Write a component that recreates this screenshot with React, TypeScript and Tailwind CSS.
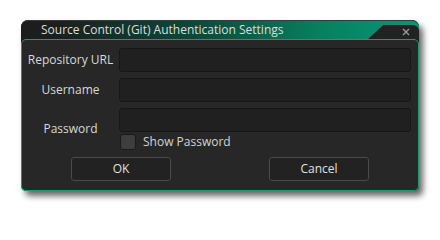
import React from "react";

const font = { fontFamily: '"Open Sans", "Noto Sans", sans-serif' };

export default function App() {
  return (
    <div className="w-[440px] h-[210px] bg-white pt-[20px] pl-[21px]" style={font}>
      <div className="w-[398px] rounded-t-[7px] rounded-b-[5px] bg-[#1d1d1d] shadow-[4px_5px_6px_rgba(0,0,0,0.6)]">
        <div className="flex h-[19px] rounded-t-[7px] bg-[linear-gradient(to_right,#1d1d1d_8%,#0b4a3c_45%,#07805f_75%,#04977a_100%)] border-t border-[#3a3a3a]">
          <div className="flex-1 pl-[20px] text-[12px] leading-[18px] text-[#dedede] whitespace-nowrap">
            Source Control (Git) Authentication Settings
          </div>
          <div className="mt-[4px] w-[51px] h-[14px] rounded-tr-[6px] bg-[#222222] [clip-path:polygon(30%_0,100%_0,100%_100%,0_100%)] flex items-center justify-end pr-[9px]">
            <svg width="8" height="8" viewBox="0 0 8 8">
              <path d="M1 1L7 7M7 1L1 7" stroke="#9a9a9a" strokeWidth="1.4" />
            </svg>
          </div>
        </div>
        <div className="h-[152px] rounded-[5px] border border-[#1f9a6c] bg-[#272727] pt-[8px] text-[12px] text-[#d9d9d9]">
          <div className="flex items-center h-[24px] pr-[7px]">
            <div className="w-[97px] text-center whitespace-nowrap">Repository URL</div>
            <div className="flex-1 h-[24px] rounded-[3px] bg-[#202020] border border-[#171717]" />
          </div>
          <div className="flex items-center h-[24px] mt-[6px] pr-[7px]">
            <div className="w-[97px] text-center">Username</div>
            <div className="flex-1 h-[24px] rounded-[3px] bg-[#202020] border border-[#171717]" />
          </div>
          <div className="flex items-center mt-[6px] pr-[7px]">
            <div className="w-[97px] text-center">Password</div>
            <div className="flex-1 flex flex-col">
              <div className="h-[24px] rounded-[3px] bg-[#202020] border border-[#171717]" />
              <div className="flex items-center mt-[2px] pl-[1px] h-[16px]">
                <div className="w-[16px] h-[16px] rounded-[3px] bg-[#3e3e3e] border border-[#1a1a1a]" />
                <span className="ml-[7px] text-[#d4d4d4] leading-[16px]">Show Password</span>
              </div>
            </div>
          </div>
          <div className="grid grid-cols-2 mt-[7px]">
            <div className="flex justify-center">
              <div className="w-[100px] h-[24px] rounded-[3px] bg-[#222222] border border-[#4a4a4a] flex items-center justify-center text-[#e0e0e0]">
                OK
              </div>
            </div>
            <div className="flex justify-center">
              <div className="w-[100px] h-[24px] rounded-[3px] bg-[#222222] border border-[#4a4a4a] flex items-center justify-center text-[#e0e0e0]">
                Cancel
              </div>
            </div>
          </div>
        </div>
      </div>
    </div>
  );
}
